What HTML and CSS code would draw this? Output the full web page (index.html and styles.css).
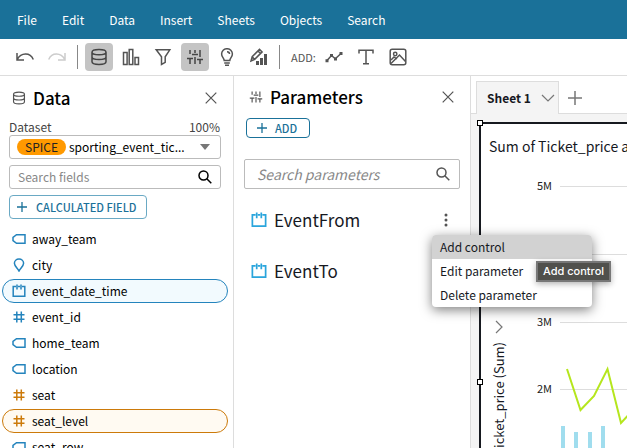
FILE: index.html
```html
<!DOCTYPE html>
<html lang="en">
<head>
<meta charset="utf-8">
<meta name="viewport" content="width=device-width, initial-scale=1">
<title>Analysis</title>
<link rel="stylesheet" href="styles.css">
</head>
<body>
<svg class="defs" aria-hidden="true">
  <symbol id="database" viewBox="0 0 18 18"><path d="M2 4.2C2 .6 16 .6 16 4.200V13.800C16 17.400 2 17.400 2 13.800zM2 4.200C2 7.600 16 7.600 16 4.200M2 9C2 12.400 16 12.400 16 9"/></symbol>
  <symbol id="sliders" viewBox="0 0 18 18"><path d="M4 2v4M9 2v3M14 2v6M4 11v5M9 9v7M14 12v4M1 10.500h6M6 6.500h6M11 11.500h6M14 8v1"/></symbol>
  <symbol id="close" viewBox="0 0 12 12"><path d="M.7.700l10.600 10.600M11.300.700L.7 11.300"/></symbol>
  <symbol id="search" viewBox="0 0 14 14"><circle cx="5.500" cy="5.500" r="4.500"/><path d="M8.800 8.800L13.300 13.300"/></symbol>
  <symbol id="plus" viewBox="0 0 10 10"><path d="M5 0v10M0 5h10"/></symbol>
  <symbol id="tag" viewBox="0 0 14 14"><path d="M4.500 2.700H13v8.600H4.500L1 8.600V5.400z"/></symbol>
  <symbol id="pin" viewBox="0 0 14 14"><path d="M7 13C5 9.800 2.400 7.800 2.400 5.300A4.600 4.300 0 0 1 11.600 5.300C11.600 7.800 9 9.800 7 13z"/></symbol>
  <symbol id="calendar" viewBox="0 0 14 14"><path d="M4 2.600H1.200v9.700h11.600V2.600H10M6 2.600h2M5 .500v5M9 .500v5"/></symbol>
  <symbol id="hash" viewBox="0 0 14 14"><path d="M4.800 1.500v11M9.300 1.500v11M1.500 4.700h11M1.500 9.300h11"/></symbol>
</svg>

<nav class="menubar">
  <a href="#">File</a><a href="#">Edit</a><a href="#">Data</a><a href="#">Insert</a><a href="#">Sheets</a><a href="#">Objects</a><a href="#">Search</a>
</nav>

<div class="toolbar" role="toolbar">
  <button class="tool" aria-label="Undo"><svg class="icon" viewBox="0 0 18 18"><path d="M1 5v7h7M1.300 11.500C5 4.500 14 4 17.300 11.500"/></svg></button>
  <button class="tool faded" aria-label="Redo"><svg class="icon" viewBox="0 0 18 18"><path d="M17 5v7h-7M16.700 11.500C13 4.500 4 4 .7 11.500"/></svg></button>
  <span class="divider"></span>
  <button class="tool active" aria-label="Data"><svg class="icon"><use href="#database"/></svg></button>
  <button class="tool" aria-label="Visuals"><svg class="icon" viewBox="0 0 18 18"><path d="M1.500 4.500h3.600v12H1.500zM7.200 1.500h3.600v15H7.200zM13 9.500h3.500v7H13z"/></svg></button>
  <button class="tool" aria-label="Filter"><svg class="icon" viewBox="0 0 18 18"><path d="M2.200 1.800h13.600l-4.600 7v5.600L7.500 16.500V8.800z"/></svg></button>
  <button class="tool active" aria-label="Parameters"><svg class="icon"><use href="#sliders"/></svg></button>
  <button class="tool" aria-label="Insights"><svg class="icon" viewBox="0 0 18 18"><path d="M6.200 12.500C6.200 10 3.600 9 3.600 6A5.400 5.300 0 0 1 14.400 6C14.400 9 11.800 10 11.800 12.500zM6.200 15h5.600M7 17.200h4M9 3.700c1.500 0 2.500 1 2.500 2.400"/></svg></button>
  <button class="tool" aria-label="Edit visual"><svg class="icon" viewBox="0 0 18 18"><path d="M1 13l1.200-4.300L9.500 1.400l2.600 2.500-7.400 7.500zM2.200 8.700l2.500 2.700M8 3l2.500 2.500"/><path class="solid" d="M6 13h3v4H6zM10 10h3v7h-3zM14 6h3v11h-3z"/></svg></button>
  <span class="divider"></span>
  <span class="add-label">ADD:</span>
  <button class="tool" aria-label="Add visual"><svg class="icon" viewBox="0 0 18 18"><path d="M2 12.500L6.500 7.500L10.300 10.800L16 5.500"/><path class="solid" d="M.5 11.200h3v3h-3zM5 6h3v3H5zM9 9.500h3v3H9zM14.500 4h3v3h-3z"/></svg></button>
  <button class="tool" aria-label="Add text"><svg class="icon" viewBox="0 0 18 18"><path d="M2 5.500V2.300h14v3.200M9 2.300v13.500M6 15.800h6"/></svg></button>
  <button class="tool" aria-label="Add image"><svg class="icon" viewBox="0 0 18 18"><rect x="1.200" y="1.200" width="15.600" height="15.600" rx="2"/><circle cx="6.200" cy="6" r="1.700"/><path d="M2 15.500l8.500-8.500 6 6.500M2 12l3-3 3 2"/></svg></button>
</div>

<main class="workspace">
  <section class="panel data-panel">
    <header class="panel-head">
      <svg class="head-icon"><use href="#database"/></svg><h2>Data</h2>
      <button class="close" aria-label="Close data"><svg><use href="#close"/></svg></button>
    </header>
    <div class="dataset-row"><label for="dataset">Dataset</label><span>100%</span></div>
    <div class="box dataset">
      <span class="spice">SPICE</span>
      <select id="dataset"><option>sporting_event_tic...</option></select>
      <svg class="caret" viewBox="0 0 10 6"><path d="M0 0h10L5 6z"/></svg>
    </div>
    <div class="box field-search">
      <input type="text" aria-label="Search fields" placeholder="Search fields">
      <svg class="search-icon"><use href="#search"/></svg>
    </div>
    <button class="outline calc"><svg><use href="#plus"/></svg>CALCULATED FIELD</button>
    <ul class="fields">
      <li><svg><use href="#tag"/></svg>away_team</li>
      <li><svg><use href="#pin"/></svg>city</li>
      <li class="selected"><svg><use href="#calendar"/></svg>event_date_time</li>
      <li><svg><use href="#hash"/></svg>event_id</li>
      <li><svg><use href="#tag"/></svg>home_team</li>
      <li><svg><use href="#tag"/></svg>location</li>
      <li class="measure"><svg><use href="#hash"/></svg>seat</li>
      <li class="measure selected"><svg><use href="#hash"/></svg>seat_level</li>
      <li><svg><use href="#tag"/></svg>seat_row</li>
    </ul>
  </section>

  <section class="panel param-panel">
    <header class="panel-head">
      <svg class="head-icon"><use href="#sliders"/></svg><h2>Parameters</h2>
      <button class="close" aria-label="Close parameters"><svg><use href="#close"/></svg></button>
    </header>
    <button class="outline add"><svg><use href="#plus"/></svg>ADD</button>
    <div class="box param-search">
      <input type="text" aria-label="Search parameters" placeholder="Search parameters">
      <svg class="search-icon"><use href="#search"/></svg>
    </div>
    <ul class="params">
      <li><svg class="cal"><use href="#calendar"/></svg><span>EventFrom</span>
        <button class="more" aria-label="EventFrom options"><svg viewBox="0 0 4 14"><circle cx="2" cy="2" r="1.500"/><circle cx="2" cy="7" r="1.500"/><circle cx="2" cy="12" r="1.500"/></svg></button>
        <div class="menu" role="menu">
          <button role="menuitem" class="hover">Add control</button>
          <button role="menuitem">Edit parameter</button>
          <button role="menuitem">Delete parameter</button>
          <span class="tooltip" role="tooltip">Add control</span>
        </div>
      </li>
      <li><svg class="cal"><use href="#calendar"/></svg><span>EventTo</span></li>
    </ul>
  </section>

  <section class="canvas">
    <div class="tabs">
      <button class="tab">Sheet 1<svg viewBox="0 0 14 8"><path d="M1 1l6 6 6-6"/></svg></button>
      <button class="new-tab" aria-label="Add sheet"><svg viewBox="0 0 14 14"><path d="M7 0v14M0 7h14"/></svg></button>
    </div>
    <div class="sheet">
      <article class="visual">
        <i class="handle corner"></i><i class="handle side"></i>
        <h3>Sum of Ticket_price and Event</h3>
        <div class="chart">
          <div class="axis-title"><svg viewBox="0 0 8 14"><path d="M1 1l6 6-6 6"/></svg><span>Ticket_price (Sum)</span></div>
          <svg class="plot" role="img" aria-label="Ticket price chart">
            <g class="grid"><path d="M34 21.500h600M34 89.500h600M34 157.500h600M34 224.500h600"/></g>
            <g class="ticks"><text x="26" y="25">5M</text><text x="26" y="93">4M</text><text x="26" y="161">3M</text><text x="26" y="228">2M</text></g>
            <path class="bars" d="M35 261h4v60h-4zM48 267h4v60h-4zM62 267h4v60h-4zM75 261h4v60h-4z"/>
            <path class="line" d="M41 204L54.500 245L68 231L81.500 204L95 258L108 244"/>
          </svg>
        </div>
      </article>
    </div>
  </section>
</main>
</body>
</html>
```
FILE: styles.css
```css
* { box-sizing: border-box; }
body {
  margin: 0;
  height: 100vh;
  overflow: hidden;
  display: flex;
  flex-direction: column;
  background: #fff;
  color: #16191f;
  font: 400 12px/20px "Noto Sans CJK SC", "Noto Sans", sans-serif;
}
button, input, select { font: inherit; color: inherit; border: 0; background: none; padding: 0; margin: 0; outline: 0; }
svg { fill: none; stroke: currentColor; stroke-width: 1.5; flex: none; }
h2, h3, ul { margin: 0; padding: 0; }
ul { list-style: none; }
.defs { display: none; }

.menubar { flex: none; height: 39px; padding: 0 17px; display: flex; align-items: center; gap: 25px; background: #1a7199; }
.menubar a { color: #fff; text-decoration: none; }

.toolbar { flex: none; height: 37px; padding: 0 11px; display: flex; align-items: center; gap: 4px; border-bottom: 1px solid #ddd; color: #545454; }
.tool { width: 28px; height: 28px; border-radius: 4px; display: grid; place-items: center; }
.tool.active { background: #c4c4c4; color: #444; }
.tool.faded { color: #ccc; }
.icon { width: 18px; height: 18px; }
.solid { fill: currentColor; stroke: none; }
.divider { width: 1px; height: 24px; margin: 0 3px 0 2px; background: #888; }
.add-label { font-size: 11px; margin: 0 0 0 4px; }

.workspace { flex: 1; min-height: 0; display: flex; }
.panel { flex: none; border-right: 1px solid #ddd; }
.data-panel { width: 234px; overflow: hidden; }
.param-panel { width: 237px; padding: 0 10px; }
.panel-head { display: flex; align-items: center; height: 44px; gap: 7px; color: #545454; }
.data-panel .panel-head { padding: 0 16px 0 12px; }
.param-panel .panel-head { padding: 0 6px 0 5px; height: 42px; }
.head-icon { width: 14px; height: 14px; }
.panel h2 { font-size: 17px; font-weight: 500; line-height: 22px; color: #000; flex: 1; }
.close { width: 12px; height: 12px; }
.close svg { width: 12px; height: 12px; display: block; stroke-width: 1.2; }

.dataset-row { display: flex; justify-content: space-between; margin: 0 13px 0 9px; height: 15px; line-height: 14px; color: #444; }
.box { display: flex; align-items: center; border: 1px solid #bbb; border-radius: 3px; height: 24px; }
.data-panel .box { margin: 0 12px 6px 9px; padding: 0 8px; }
.box input, .box select { flex: 1; min-width: 0; width: 0; appearance: none; }
.box input::placeholder { color: #888; opacity: 1; }
.spice { background: #ff9900; border-radius: 8px; line-height: 16px; padding: 0 8px; margin-right: 3px; margin-left: -1px; color: #222; }
.dataset select { color: #000; }
.caret { width: 10px; height: 6px; fill: #777; stroke: none; margin-right: 2px; }
.search-icon { width: 14px; height: 14px; }
.field-search .search-icon { color: #000; }
.outline { display: flex; align-items: center; color: #1a7199; border: 1px solid #1a7199; border-radius: 4px; font-size: 11px; font-weight: 500; line-height: 18px; }
.outline svg { width: 10px; height: 10px; stroke-width: 1.3; }
.calc { height: 24px; margin-left: 9px; padding: 0 10px 0 7px; gap: 9px; border-color: #6aa9c4; }
.fields { margin: 8px 5px 0 2px; display: grid; gap: 2px; }
.fields li { display: flex; align-items: center; gap: 6px; height: 24px; padding-left: 9px; border: 1px solid transparent; border-radius: 12px; color: #000; }
.fields svg { width: 14px; height: 14px; color: #2484bd; }
.fields .measure svg { color: #cc7a0a; }
.fields .selected { border-color: #2484bd; background: #f2fafe; }
.fields .measure.selected { border-color: #cc7a0a; background: #fffaf2; }

.add { height: 20px; margin-left: 2px; padding: 0 12px 0 10px; gap: 8px; }
.param-search { height: 30px; margin-top: 21px; padding: 0 9px 0 12px; font-size: 14px; color: #545454; border-radius: 2px; }
.param-search input { font-style: italic; }
.params { margin-top: 5px; padding: 0 10px 0 7px; }
.params li { position: relative; display: flex; align-items: center; height: 51px; gap: 7px; font-size: 17px; }
.params span { flex: 1; }
.cal { width: 16px; height: 16px; color: #2aa5dc; }
.more { width: 6px; height: 14px; color: #545454; }
.more svg { width: 4px; height: 14px; fill: currentColor; stroke: none; display: block; }
.menu { position: absolute; z-index: 2; top: 41px; left: 181px; width: 160px; border-radius: 4px; background: #fff; box-shadow: 0 3px 12px rgba(0, 0, 0, .5); font-size: 12px; }
.menu button { display: block; width: 100%; height: 24px; line-height: 24px; padding-left: 8px; text-align: left; }
.menu .hover { background: #d2d2d2; border-radius: 4px 4px 0 0; }
.tooltip { position: absolute; top: 26px; left: 104px; padding: 0 5px; border: 2px solid #777; background: #50504c; color: #fff; font: 500 11px/17px Inter, sans-serif; white-space: nowrap; box-shadow: 0 2px 6px rgba(0, 0, 0, .3); }

.canvas { flex: 1; min-width: 0; display: flex; flex-direction: column; background: #f4f4f4; overflow: hidden; }
.tabs { flex: none; display: flex; height: 38px; padding: 5px 0 0 5px; background: #fff; box-shadow: inset 0 -1px #ddd; }
.tab { display: flex; align-items: center; gap: 10px; padding: 0 3px 0 10px; border: 1px solid #ddd; border-bottom: 0; background: #f4f4f4; font-weight: 700; }
.tab svg { width: 14px; height: 8px; color: #777; stroke-width: 1.2; }
.new-tab { margin-left: 9px; color: #777; }
.new-tab svg { width: 14px; height: 14px; display: block; }
.sheet { flex: 1; min-height: 0; padding: 8px 0 0 8px; display: flex; }
.visual { position: relative; flex: 1; min-width: 0; border: solid #16191f; border-width: 2px 0 0 2px; background: #fff; }
.handle { position: absolute; width: 6px; height: 6px; border: 1px solid #000; background: #fff; }
.corner { left: -4px; top: -4px; }
.side { left: -4px; top: 255px; }
.visual h3 { margin: 10px 0 0 8px; font-size: 14px; line-height: 24px; font-weight: 400; white-space: nowrap; overflow: hidden; }
.chart { display: flex; margin-top: 7px; height: 340px; }
.axis-title { width: 45px; padding: 155px 0 0 10px; }
.axis-title svg { display: block; width: 8px; height: 14px; margin-left: 4px; color: #777; stroke-width: 1.2; }
.axis-title span { display: block; writing-mode: vertical-rl; transform: rotate(180deg); margin-top: 8px; font-size: 13px; line-height: 16px; white-space: nowrap; }
.plot { flex: 1; min-width: 0; height: 100%; }
.grid { stroke: #ddd; stroke-width: 1; }
.ticks { fill: #222; stroke: none; font-size: 11px; text-anchor: end; }
.bars { fill: #a0ddee; stroke: none; }
.line { stroke: #b5e61d; stroke-width: 2; }
```
